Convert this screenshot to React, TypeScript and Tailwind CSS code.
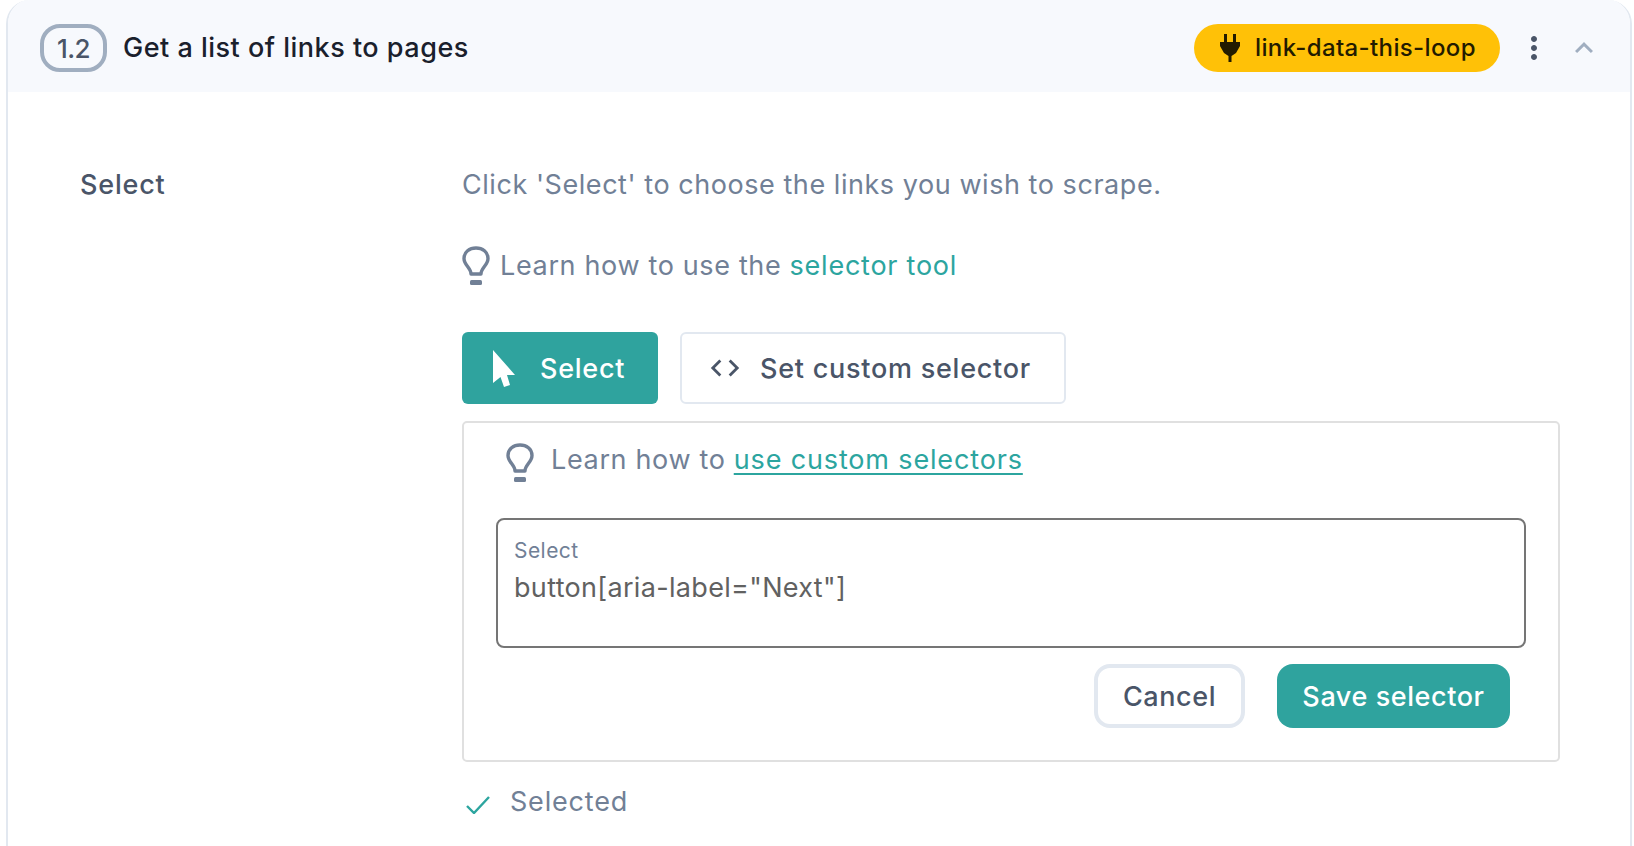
import { MdMoreVert, MdExpandLess, MdCode } from "react-icons/md";

function Bulb() {
  return (
    <svg viewBox="0 0 28 40" className="w-[28px] h-[40px] shrink-0" fill="none">
      <path d="M9 28 C9 22 2 19 2 12.5 C2 6 7.5 2 14 2 C20.5 2 26 6 26 12.5 C26 19 19 22 19 28 Z" stroke="#718096" strokeWidth="3.4" strokeLinejoin="round" />
      <rect x="8" y="34" width="12" height="5" rx="1.5" fill="#718096" />
    </svg>
  );
}

export default function App() {
  return (
    <div className="h-[846px] overflow-hidden bg-white pl-[6px] pr-[2px] font-['Inter',sans-serif]">
      <div className="h-full rounded-t-[24px] border-x-2 border-[#e2e8f0] bg-white overflow-hidden">
        <header className="h-[92px] bg-[#f7f9fd] flex items-center pl-[32px] pr-[28px] pt-[4px]">
          <span className="w-[67px] h-[48px] rounded-[20px] border-4 border-[#a0aec0] flex items-center justify-center text-[26px] font-medium text-[#4a5568] tracking-[-0.5px]">1.2</span>
          <h1 className="ml-[16px] text-[27px] font-medium tracking-[0.5px] text-[#1a202c]">Get a list of links to pages</h1>
          <span className="ml-auto w-[306px] h-[48px] rounded-full bg-[#ffc107] flex items-center pl-[25px] text-[24px] font-medium tracking-[0.37px] text-[#231b00]">
            <svg viewBox="0 0 22 28" className="w-[22px] h-[28px] shrink-0" fill="#231b00">
              <path d="M5 0 H8 V8 H14 V0 H17 V8 H21 V12 L17 19 L12.5 22 V28 H9.5 V22 L5 19 L1 12 V8 H5 Z" />
            </svg>
            <span className="ml-[14px]">link-data-this-loop</span>
          </span>
          <MdMoreVert className="ml-[16px] w-[36px] h-[36px] text-[#4a5568]" />
          <MdExpandLess className="ml-[14px] w-[36px] h-[36px] text-[#a0aec0]" />
        </header>
        <main className="flex pl-[72px] pr-[70px]">
          <div className="w-[382px] shrink-0 pt-[76px] text-[27px] font-medium tracking-[0.8px] text-[#4a5568] leading-[34px]">Select</div>
          <div className="flex-1 pt-[76px]">
            <p className="text-[27px] tracking-[0.55px] leading-[34px] text-[#718096]">Click 'Select' to choose the links you wish to scrape.</p>
            <div className="mt-[44px] flex items-center gap-[10px] text-[27px] tracking-[0.65px] leading-[40px] text-[#718096]">
              <Bulb />
              <span>Learn how to use the <span className="text-[#2ca59f] tracking-[0.75px]">selector tool</span></span>
            </div>
            <div className="mt-[46px] flex gap-[22px]">
              <button className="w-[196px] h-[72px] rounded-[6px] bg-[#2fa39e] text-white flex items-center pl-[31px] text-[27px] font-medium tracking-[0.75px]">
                <svg viewBox="0 0 22 37" className="w-[22px] h-[37px] shrink-0" fill="#fff"><path d="M0 0 L22 25 L14 25 L17 35 L11 37 L7.5 27 L0 33 Z" /></svg>
                <span className="ml-[25px] pt-[3px]">Select</span>
              </button>
              <button className="w-[386px] h-[72px] rounded-[6px] border-2 border-[#e2e8f0] bg-white text-[#4a5568] flex items-center pl-[26px] text-[27px] font-medium tracking-[0.75px]">
                <MdCode className="w-[34px] h-[34px] shrink-0" />
                <span className="ml-[18px] pt-[3px]">Set custom selector</span>
              </button>
            </div>
            <section className="mt-[17px] h-[341px] rounded-[5px] border-2 border-[#e0e0e0] pl-[32px] pr-[32px] pt-[20px]">
              <div className="flex items-center h-[40px] ml-[10px] gap-[17px] text-[27px] tracking-[0.65px] leading-[40px] text-[#718096]">
                <Bulb />
                <span className="pb-[6px]">Learn how to <a className="text-[#2ca59f] tracking-[0.85px] underline underline-offset-[4px]">use custom selectors</a></span>
              </div>
              <div className="mt-[35px] h-[130px] rounded-[8px] border-2 border-[#757575] pl-[16px] pt-[18px]">
                <div className="text-[21px] tracking-[0.45px] leading-[26px] text-[#718096]">Select</div>
                <div className="mt-[7px] text-[27px] tracking-[0.32px] leading-[34px] text-[#616161]">button[aria-label="Next"]</div>
              </div>
              <div className="mt-[16px] flex justify-end gap-[32px] pr-[16px]">
                <button className="w-[151px] h-[64px] pt-[3px] rounded-[16px] border-4 border-[#e2e8f0] bg-white text-[27px] font-medium tracking-[0.6px] text-[#4a5568]">Cancel</button>
                <button className="w-[233px] h-[64px] pt-[3px] rounded-[16px] bg-[#2fa39e] text-[27px] font-medium tracking-[0.58px] text-white">Save selector</button>
              </div>
            </section>
            <div className="mt-[22px] flex items-center text-[27px] tracking-[0.8px] leading-[36px] text-[#718096]">
              <svg viewBox="0 0 24 18" className="ml-[4px] w-[24px] h-[18px] mt-[6px] shrink-0" fill="none"><path d="M1 10 L8 17 L23 1" stroke="#2ca59f" strokeWidth="2.4" /></svg>
              <span className="ml-[20px]">Selected</span>
            </div>
          </div>
        </main>
      </div>
    </div>
  );
}
